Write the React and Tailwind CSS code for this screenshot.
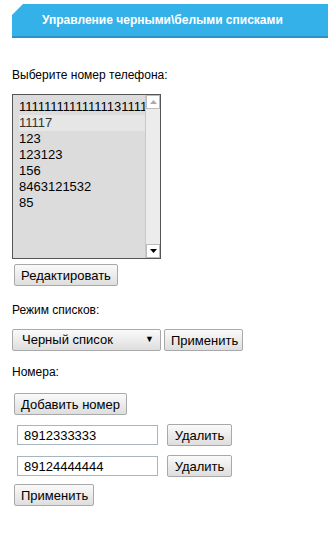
import { useState } from 'react';

const numbers = ['11111111111111131111', '11117', '123', '123123', '156', '8463121532', '85'];

const Btn = ({ children, className = '' }) => (
    <button className={`h-[22px] px-[6px] border border-[#a9a9a9] rounded-[2px] bg-gradient-to-b from-[#fafafa] to-[#dedede] text-[13px] leading-none text-black ${className}`}>
        {children}
    </button>
);

export default function App() {
    const [selected] = useState(1);

    return (
        <div className="w-[328px] h-[555px] bg-white font-['Liberation_Sans',Arial,sans-serif] text-[13px] text-black">
            {/* Header */}
            <div className="pt-[4px] pl-[12px]">
                <div className="h-[34px] bg-[#35b1ea] border-b-2 border-[#2b93c8] flex items-center pl-[30px] [clip-path:polygon(11px_0,100%_0,100%_100%,0_100%,0_11px)]">
                    <span className="text-white font-bold text-[12px] whitespace-nowrap">Управление черными\белыми списками</span>
                </div>
            </div>

            <div className="pl-[12px]">
                <div className="mt-[28px] text-[12px]">Выберите номер телефона:</div>

                {/* Listbox */}
                <div className="mt-[10px] w-[149px] h-[165px] border border-[#555] bg-[#dcdcdc] flex">
                    <div className="flex-1 overflow-hidden pt-[4px] pl-[6px]">
                        {numbers.map((n, i) => (
                            <div
                                key={n}
                                className={`h-[16px] leading-[16px] whitespace-nowrap overflow-hidden w-[127px] text-[13px] ${i === selected ? 'bg-[#e6e6e6] text-[#333]' : ''}`}
                            >
                                {n}
                            </div>
                        ))}
                    </div>
                    <div className="w-[15px] bg-[#ececec] border-l border-[#c8c8c8] flex flex-col justify-between">
                        <div className="h-[14px] bg-white border border-[#bbb] flex items-center justify-center">
                            <svg width="7" height="4" viewBox="0 0 7 4"><path d="M0 4L3.5 0L7 4Z" fill="#aaa" /></svg>
                        </div>
                        <div className="h-[14px] bg-white border border-[#bbb] flex items-center justify-center">
                            <svg width="7" height="4" viewBox="0 0 7 4"><path d="M0 0L7 0L3.5 4Z" fill="#000" /></svg>
                        </div>
                    </div>
                </div>

                <Btn className="mt-[5px] ml-[2px] w-[104px]">Редактировать</Btn>

                <div className="mt-[15px] text-[12px]">Режим списков:</div>

                <div className="mt-[10px] flex items-center gap-[3px]">
                    <div className="w-[149px] h-[22px] border border-[#a9a9a9] rounded-[2px] bg-gradient-to-b from-[#fafafa] to-[#dedede] flex items-center justify-between pl-[9px] pr-[6px]">
                        <span>Черный список</span>
                        <span className="text-[9px]">▼</span>
                    </div>
                    <Btn className="w-[79px]">Применить</Btn>
                </div>

                <div className="mt-[12px] text-[12px]">Номера:</div>

                <Btn className="mt-[12px] ml-[2px] w-[113px]">Добавить номер</Btn>

                <div className="mt-[9px] ml-[5px] flex flex-col gap-[9px]">
                    {['8912333333', '89124444444'].map((v) => (
                        <div key={v} className="flex items-center gap-[9px]">
                            <input
                                readOnly
                                value={v}
                                className="w-[141px] h-[20px] border border-[#a7b4c2] px-[6px] text-[13px] outline-none"
                            />
                            <Btn className="w-[65px]">Удалить</Btn>
                        </div>
                    ))}
                </div>

                <Btn className="mt-[7px] ml-[2px] w-[80px]">Применить</Btn>
            </div>
        </div>
    );
}
